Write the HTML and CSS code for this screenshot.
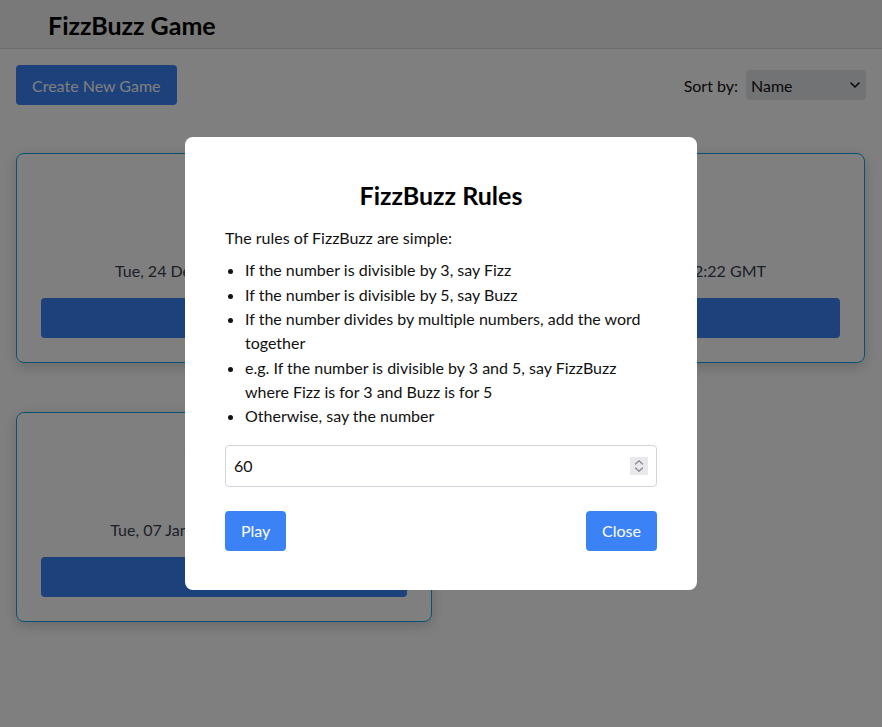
FILE: index.html
```html
<!DOCTYPE html>
<html lang="en">
<head>
<meta charset="utf-8">
<title>FizzBuzz Game</title>
<link rel="stylesheet" href="styles.css">
</head>
<body>
<header class="topbar">
  <h1 class="app-title">FizzBuzz Game</h1>
</header>
<main class="page">
  <div class="toolbar">
    <button class="btn btn-primary">Create New Game</button>
    <label class="sort">
      <span class="sort-label">Sort by:</span>
      <span class="select-wrap">
        <select class="select">
          <option>Name</option>
          <option>Date</option>
        </select>
        <svg class="select-arrow" width="10" height="6" viewBox="0 0 10 6"><path d="M1 1l4 4 4-4" fill="none" stroke="#111" stroke-width="1.6" stroke-linecap="round" stroke-linejoin="round"/></svg>
      </span>
    </label>
  </div>
  <section class="games">
    <article class="card card-wide">
      <h2 class="card-title">FizzBuzzWhizz</h2>
      <p class="card-desc">Fizz for 3, Buzz for 5, Whizz for 7 and Bang for 11, up to 100</p>
      <p class="card-date">Tue, 24 Dec 2024 10:42:22 GMT - Tue, 24 Dec 2024 10:42:22 GMT - 24 Dec 10:42:22 GMT</p>
      <button class="btn btn-card">Play</button>
    </article>
    <article class="card">
      <h2 class="card-title card-title-sm">Defaults</h2>
      <p class="card-desc">3 &amp; 5</p>
      <p class="card-date">Tue, 07 Jan 2025 09:15:40 GMT</p>
      <button class="btn btn-card">Play</button>
    </article>
  </section>
</main>

<div class="overlay">
  <div class="modal">
    <h2 class="modal-title">FizzBuzz Rules</h2>
    <p class="modal-intro">The rules of FizzBuzz are simple:</p>
    <ul class="rules">
      <li>If the number is divisible by 3, say Fizz</li>
      <li>If the number is divisible by 5, say Buzz</li>
      <li>If the number divides by multiple numbers, add the word together</li>
      <li>e.g. If the number is divisible by 3 and 5, say FizzBuzz where Fizz is for 3 and Buzz is for 5</li>
      <li>Otherwise, say the number</li>
    </ul>
    <div class="number-field">
      <input class="number-input" type="text" value="60">
      <span class="spinner">
        <svg width="10" height="14" viewBox="0 0 10 14"><path d="M1.5 5L5 1.8 8.5 5M1.5 9L5 12.2 8.5 9" fill="none" stroke="#8a8a92" stroke-width="1.3" stroke-linecap="round" stroke-linejoin="round"/></svg>
      </span>
    </div>
    <div class="modal-actions">
      <button class="btn btn-primary">Play</button>
      <button class="btn btn-primary">Close</button>
    </div>
  </div>
</div>
</body>
</html>
```
FILE: styles.css
```css
* { box-sizing: border-box; }
html, body { margin: 0; padding: 0; }
body {
  font-family: "Segoe UI", Lato, "Noto Sans", sans-serif;
  font-size: 16px;
  color: #111;
  background: #fff;
}
.topbar {
  height: 49px;
  background: #f2f2f2;
  border-bottom: 1px solid #d8d8d8;
  padding: 0 48px;
  display: flex;
  align-items: center;
}
.app-title {
  margin: 0;
  font-size: 25px;
  font-weight: 700;
  color: #000;
  line-height: 32px;
  position: relative;
  top: 1px;
}
.page { padding: 16px; }
.toolbar {
  display: flex;
  justify-content: space-between;
  align-items: center;
}
.btn {
  font-family: inherit;
  font-size: 16px;
  border: none;
  border-radius: 4px;
  height: 40px;
  padding: 0 16px;
  cursor: pointer;
}
.btn-primary { background: #3b82f6; color: #fff; }
.sort { display: flex; align-items: center; gap: 8px; }
.sort-label { font-size: 16px; color: #111; }
.select-wrap { position: relative; display: inline-block; }
.select {
  appearance: none;
  -webkit-appearance: none;
  width: 120px;
  height: 30px;
  border: none;
  border-radius: 4px;
  background: #e5e7eb;
  font-family: inherit;
  font-size: 16px;
  color: #111;
  padding: 0 5px;
}
.select-arrow { position: absolute; right: 6px; top: 12px; pointer-events: none; }
.games {
  margin-top: 48px;
  display: grid;
  grid-template-columns: 416px 416px;
  column-gap: 17px;
  row-gap: 49px;
}
.card {
  border: 1px solid #0ea5e9;
  border-radius: 8px;
  padding: 24px;
  text-align: center;
  box-shadow: 0 4px 14px rgba(0,0,0,0.18);
  display: flex;
  flex-direction: column;
}
.card-wide { grid-column: 1 / 3; }
.card-title { margin: 0; font-size: 24px; font-weight: 400; line-height: 32px; color: #111; }
.card-title-sm { font-size: 22px; }
.card-desc { margin: 8px 0 0; line-height: 24px; color: #333; }
.card-date { margin: 17px 0 0; line-height: 24px; color: #374151; white-space: nowrap; }
.btn-card { margin-top: 15px; background: #3b82f6; color: #fff; width: 100%; }
.overlay {
  position: fixed;
  inset: 0;
  background: rgba(0,0,0,0.5);
  display: flex;
  align-items: center;
  justify-content: center;
}
.modal {
  width: 512px;
  background: #fff;
  border-radius: 8px;
  padding: 40px 40px 39px;
}
.modal-title {
  margin: 0;
  text-align: center;
  font-size: 25px;
  font-weight: 700;
  line-height: 32px;
  color: #000;
  position: relative;
  top: 2px;
}
.modal-intro { margin: 17px 0 8px; line-height: 24px; }
.rules { margin: 0; padding-left: 20px; line-height: 24.33px; }
.number-field { position: relative; margin-top: 16px; }
.number-input {
  width: 100%;
  height: 42px;
  border: 1px solid #d1d5db;
  border-radius: 4px;
  padding: 0 8px;
  font-family: inherit;
  font-size: 16px;
  color: #111;
  outline: none;
}
.spinner {
  position: absolute;
  right: 9px;
  top: 12px;
  width: 18px;
  height: 18px;
  background: #e9e9ed;
  display: flex;
  align-items: center;
  justify-content: center;
}
.modal-actions {
  margin-top: 24px;
  display: flex;
  justify-content: space-between;
}
```
